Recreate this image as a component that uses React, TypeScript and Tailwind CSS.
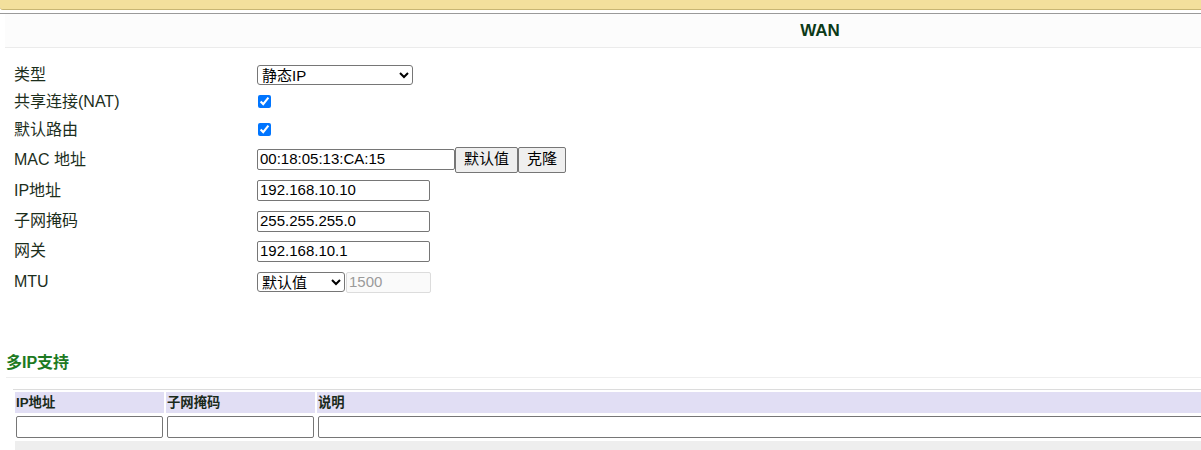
import { useState } from "react";

const font = { fontFamily: '"Liberation Sans", "Noto Sans CJK SC", sans-serif' };

function Row({ label, h, children }: { label: string; h: string; children?: React.ReactNode }) {
  return (
    <div className={`flex items-center ${h}`}>
      <div className="w-[252px] pl-[9px] text-[16px] text-[#1c2e1c]">{label}</div>
      <div className="flex items-center">{children}</div>
    </div>
  );
}

const inputCls =
  "h-[21px] border border-[#767676] rounded-[2px] bg-white px-[2px] text-[15px] text-black outline-none";

export default function App() {
  const [nat, setNat] = useState(true);
  const [route, setRoute] = useState(true);

  return (
    <div className="min-h-[450px] bg-white overflow-hidden" style={font}>
      {/* top notice bar */}
      <div className="h-[10px] bg-[#f3e09c] border-b border-[#c8b673] rounded-bl-[3px]" />
      <div className="h-[3px]" />
      <div className="border-t border-[#9a9a9a]" />

      <div className="ml-[5px] w-[1630px]">
        <div className="h-[34px] bg-[#fcfcfc] border-b border-[#ebebeb] flex items-center justify-center">
          <span className="text-[17px] font-bold text-[#0c3a18] mt-[1px]">WAN</span>
        </div>

        <div className="pt-[13px]">
          <Row label="类型" h="h-[27px]">
            <select className="h-[20px] w-[156px] border border-[#767676] rounded-[3px] bg-white text-[15px] text-black">
              <option>静态IP</option>
              <option>DHCP</option>
              <option>PPPoE</option>
            </select>
          </Row>
          <Row label="共享连接(NAT)" h="h-[27px]">
            <input
              type="checkbox"
              checked={nat}
              onChange={() => setNat(!nat)}
              className="ml-[1px] w-[13px] h-[13px] accent-[#0075ff]"
            />
          </Row>
          <Row label="默认路由" h="h-[29px]">
            <input
              type="checkbox"
              checked={route}
              onChange={() => setRoute(!route)}
              className="ml-[1px] w-[13px] h-[13px] accent-[#0075ff]"
            />
          </Row>
          <Row label="MAC 地址" h="h-[31px]">
            <input className={`${inputCls} w-[198px]`} defaultValue="00:18:05:13:CA:15" />
            <button className="h-[26px] w-[63px] border border-[#767676] rounded-[2px] bg-[#efefef] text-[15px] text-black">
              默认值
            </button>
            <button className="h-[26px] w-[48px] border border-[#767676] rounded-[2px] bg-[#efefef] text-[15px] text-black">
              克隆
            </button>
          </Row>
          <Row label="IP地址" h="h-[31px]">
            <input className={`${inputCls} w-[173px]`} defaultValue="192.168.10.10" />
          </Row>
          <Row label="子网掩码" h="h-[30px]">
            <input className={`${inputCls} w-[173px]`} defaultValue="255.255.255.0" />
          </Row>
          <Row label="网关" h="h-[30px]">
            <input className={`${inputCls} w-[173px]`} defaultValue="192.168.10.1" />
          </Row>
          <Row label="MTU" h="h-[32px]">
            <select className="h-[20px] w-[88px] border border-[#767676] rounded-[3px] bg-white text-[15px] text-black">
              <option>默认值</option>
              <option>手动</option>
            </select>
            <input
              disabled
              className="ml-[1px] h-[21px] w-[85px] border border-[#dcdcdc] rounded-[2px] bg-[#fafafa] px-[2px] text-[15px] text-[#9a9a9a]"
              defaultValue="1500"
            />
          </Row>
        </div>

        <div className="mt-[52px] ml-[1px] h-[28px] border-b border-[#eeeeee] flex items-end pb-[2px]">
          <span className="text-[16px] font-bold text-[#1d7a22]">多IP支持</span>
        </div>

        <div className="mt-[11px] ml-[8px]">
          <table className="w-[1610px] border-separate border-spacing-[2px] border-t border-[#dcdcdc] text-[13.33px]">
            <thead>
              <tr className="bg-[#e1def4]">
                <th className="w-[149px] h-[21px] text-left font-bold pl-[1px] text-[#1a2a1a]">IP地址</th>
                <th className="w-[149px] text-left font-bold pl-[1px] text-[#1a2a1a]">子网掩码</th>
                <th className="text-left font-bold pl-[1px] text-[#1a2a1a]">说明</th>
              </tr>
            </thead>
            <tbody>
              <tr>
                <td className="h-[24px] px-[1px]">
                  <input className="w-full h-[22px] border border-[#767676] rounded-[2px] bg-white" />
                </td>
                <td className="px-[1px]">
                  <input className="w-full h-[22px] border border-[#767676] rounded-[2px] bg-white" />
                </td>
                <td className="px-[1px]">
                  <input className="w-full h-[22px] border border-[#767676] rounded-[2px] bg-white" />
                </td>
              </tr>
              <tr className="bg-[#eeeeee]">
                <td className="h-[24px]" colSpan={3} />
              </tr>
            </tbody>
          </table>
        </div>
      </div>
    </div>
  );
}
